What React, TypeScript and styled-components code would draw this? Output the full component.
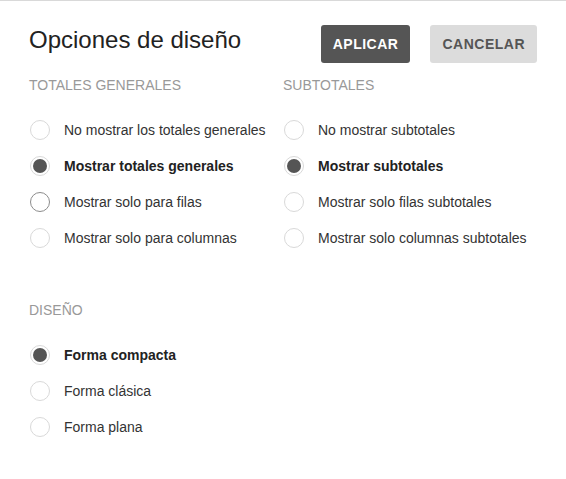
import React from "react";
import styled, { createGlobalStyle } from "styled-components";

const Global = createGlobalStyle`
  html, body { margin: 0; padding: 0; background: #fff; }
  body { font-family: "Liberation Sans", Arial, sans-serif; }
`;

const Dialog = styled.div`
  border-top: 1px solid #d9d9d9;
  padding: 24px 29px 0 29px;
  width: 566px;
  height: 478px;
  box-sizing: border-box;
  background: #fff;
`;

const Header = styled.div`
  display: flex;
  align-items: center;
  height: 38px;
`;

const Title = styled.h1`
  flex: 1;
  margin: 0;
  font-size: 24px;
  font-weight: 400;
  color: #222;
  line-height: 30px;
  margin-top: -8px;
`;

const Button = styled.button<{ $primary?: boolean }>`
  height: 38px;
  border: none;
  border-radius: 3px;
  padding: 0 12px;
  margin-left: ${(p) => (p.$primary ? "0" : "20px")};
  background: ${(p) => (p.$primary ? "#555" : "#dcdcdc")};
  color: ${(p) => (p.$primary ? "#fff" : "#555")};
  font-family: "Liberation Sans", Arial, sans-serif;
  font-weight: 700;
  font-size: 14px;
  letter-spacing: 0.5px;
  cursor: pointer;
`;

const Columns = styled.div`
  display: grid;
  grid-template-columns: 254px 1fr;
  margin-top: 12px;
`;

const Section = styled.div<{ $top?: number }>`
  display: flex;
  flex-direction: column;
  margin-top: ${(p) => p.$top ?? 0}px;
`;

const SectionTitle = styled.div`
  font-size: 14px;
  line-height: 20px;
  color: #999;
  text-transform: uppercase;
  margin-bottom: 17px;
`;

const Row = styled.label`
  display: flex;
  align-items: center;
  height: 36px;
  cursor: pointer;
`;

const Circle = styled.span<{ $checked?: boolean; $hover?: boolean }>`
  width: 20px;
  height: 20px;
  box-sizing: border-box;
  border-radius: 50%;
  border: 1px solid ${(p) => (p.$hover ? "#8c8c8c" : "#d9d9d9")};
  margin-left: 1px;
  margin-right: 14px;
  display: flex;
  align-items: center;
  justify-content: center;
  flex: none;
  &::after {
    content: "";
    display: ${(p) => (p.$checked ? "block" : "none")};
    width: 14px;
    height: 14px;
    border-radius: 50%;
    background: #555;
  }
`;

const Label = styled.span<{ $checked?: boolean }>`
  font-size: 14px;
  color: ${(p) => (p.$checked ? "#222" : "#333")};
  font-weight: ${(p) => (p.$checked ? 700 : 400)};
  white-space: nowrap;
`;

type Opt = { label: string; checked?: boolean; hover?: boolean };

const Radio = ({ label, checked, hover }: Opt) => (
  <Row>
    <Circle $checked={checked} $hover={hover} />
    <Label $checked={checked}>{label}</Label>
  </Row>
);

const totals: Opt[] = [
  { label: "No mostrar los totales generales" },
  { label: "Mostrar totales generales", checked: true },
  { label: "Mostrar solo para filas", hover: true },
  { label: "Mostrar solo para columnas" },
];

const subtotals: Opt[] = [
  { label: "No mostrar subtotales" },
  { label: "Mostrar subtotales", checked: true },
  { label: "Mostrar solo filas subtotales" },
  { label: "Mostrar solo columnas subtotales" },
];

const layout: Opt[] = [
  { label: "Forma compacta", checked: true },
  { label: "Forma clásica" },
  { label: "Forma plana" },
];

export default function App() {
  return (
    <>
      <Global />
      <Dialog>
        <Header>
          <Title>Opciones de diseño</Title>
          <Button $primary>APLICAR</Button>
          <Button>CANCELAR</Button>
        </Header>
        <Columns>
          <Section>
            <SectionTitle>Totales generales</SectionTitle>
            {totals.map((o) => (
              <Radio key={o.label} {...o} />
            ))}
          </Section>
          <Section>
            <SectionTitle>Subtotales</SectionTitle>
            {subtotals.map((o) => (
              <Radio key={o.label} {...o} />
            ))}
          </Section>
        </Columns>
        <Section $top={44}>
          <SectionTitle>Diseño</SectionTitle>
          {layout.map((o) => (
            <Radio key={o.label} {...o} />
          ))}
        </Section>
      </Dialog>
    </>
  );
}
